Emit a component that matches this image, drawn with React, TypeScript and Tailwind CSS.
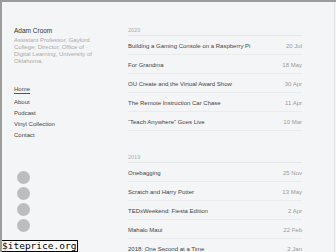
import React from "react";

const posts2020 = [
  ["Building a Gaming Console on a Raspberry Pi", "20 Jul"],
  ["For Grandma", "18 May"],
  ["OU Create and the Virtual Award Show", "30 Apr"],
  ["The Remote Instruction Car Chase", "11 Apr"],
  ["\u201cTeach Anywhere\u201d Goes Live", "10 Mar"],
];
const posts2019 = [
  ["Onebagging", "25 Nov"],
  ["Scratch and Harry Potter", "13 May"],
  ["TEDxWeekend: Fiesta Edition", "2 Apr"],
  ["Mahalo Maui", "22 Feb"],
  ["2018: One Second at a Time", "2 Jan"],
];

function Year({ year, posts }: { year: string; posts: string[][] }) {
  return (
    <div>
      <div className="text-[5.5px] text-[#aaa] h-[8px] leading-[8px]">{year}</div>
      <div className="mt-[1px] border-t border-[#e6e7e9]">
        {posts.map(([t, d]) => (
          <div key={t} className="flex justify-between items-center h-[19px] pt-[3px] border-b border-[#eaebed] text-[6px]">
            <span className="text-[#444]">{t}</span>
            <span className="text-[#999]">{d}</span>
          </div>
        ))}
      </div>
    </div>
  );
}

export default function App() {
  return (
    <div
      className="relative w-[336px] h-[252px] overflow-hidden bg-[#f4f5f6] border-t-2 border-l-2 border-[#9c9c9c]"
      style={{ fontFamily: '"Liberation Sans", Arial, sans-serif' }}
    >
      <div className="flex h-full border-r border-[#e2e3e5] w-[333px]">
        <div className="w-[126px] pl-[12px] pt-[24px] shrink-0">
          <div className="text-[6.5px] text-[#333] leading-[9px]">Adam Croom</div>
          <div className="mt-[2px] text-[6px] leading-[7px] text-[#aaa] w-[82px]">
            Assistant Professor, Gaylord College; Director, Office of Digital Learning, University of Oklahoma.
          </div>
          <div className="mt-[19px] flex flex-col text-[6px] text-[#444] leading-[11px]">
            <span className="w-fit border-b border-[#555] leading-[8px] mb-[3px] pt-[1px]">Home</span>
            <span>About</span>
            <span>Podcast</span>
            <span>Vinyl Collection</span>
            <span>Contact</span>
          </div>
          <div className="mt-[30px] flex flex-col gap-[3px] pl-[3px]">
            <div className="w-[13px] h-[13px] rounded-full bg-[#bdbdbd]" />
            <div className="w-[13px] h-[13px] rounded-full bg-[#bdbdbd]" />
            <div className="w-[13px] h-[13px] rounded-full bg-[#bdbdbd]" />
            <div className="w-[13px] h-[13px] rounded-full bg-[#bdbdbd]" />
          </div>
        </div>
        <div className="w-[174px] pt-[24px] flex flex-col gap-[22px]">
          <Year year="2020" posts={posts2020} />
          <Year year="2019" posts={posts2019} />
        </div>
      </div>
      <div
        className="absolute left-[-2px] bottom-0 bg-white border border-black text-black text-[9.5px] leading-[10px] px-[1px] h-[12px]"
        style={{ fontFamily: '"DejaVu Sans Mono", monospace' }}
      >
        $iteprice.org
      </div>
    </div>
  );
}
